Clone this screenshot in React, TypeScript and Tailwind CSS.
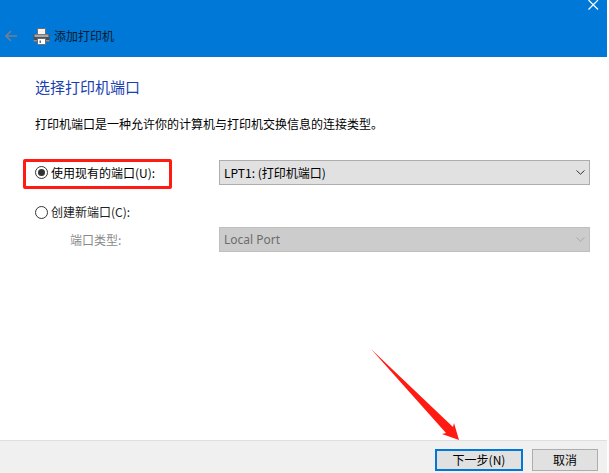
const font = "font-['Microsoft_YaHei','Noto_Sans_CJK_SC','Liberation_Sans',sans-serif]";

function Chevron({ className }: { className: string }) {
  return (
    <svg width="9" height="5" viewBox="0 0 9 5" fill="none" className={className}>
      <path d="M0.5 0.5 L4.5 4.2 L8.5 0.5" stroke="currentColor" strokeWidth="1" />
    </svg>
  );
}

function PrinterIcon() {
  return (
    <svg width="17" height="17" viewBox="0 0 17 17" className="shrink-0">
      <path d="M4.5 0.5h8v6h-8z" fill="#f4f4f4" stroke="#6d6d6d" strokeWidth="1" />
      <path d="M0.5 6h16v7.5h-16z" fill="#4c5056" />
      <path d="M1.5 6.5h14v2.5h-14z" fill="#a4a8ad" />
      <path d="M0.5 12h16v1.5h-16z" fill="#8f9399" />
      <path d="M4.5 10.5h8v6h-8z" fill="#fff" stroke="#6d6d6d" strokeWidth="1" />
      <path d="M6.5 12.5h1.5v2.5h-1.5z" fill="#2f7fb8" />
    </svg>
  );
}

function Radio({ checked }: { checked?: boolean }) {
  return (
    <span className="flex h-[13px] w-[13px] shrink-0 items-center justify-center rounded-full border border-[#333] bg-white">
      {checked && <span className="h-[7px] w-[7px] rounded-full bg-[#333]" />}
    </span>
  );
}

export default function App() {
  return (
    <div className={`relative flex h-[473px] w-[609px] flex-col bg-white pr-[2px] text-[12px] text-black ${font}`}>
      <div className="relative flex h-[57px] items-end bg-[#0078d7]">
        <svg width="11" height="11" viewBox="0 0 11 11" fill="none" className="absolute top-0 right-[8px]">
          <path d="M0.5 0 L10 9.5 M10 0 L0.5 9.5" stroke="#fff" strokeWidth="1.2" />
        </svg>
        <div className="flex h-[44px] w-full items-center pt-[2px] pl-[5px]">
          <svg width="12" height="12" viewBox="0 0 12 12" fill="none" className="shrink-0">
            <path d="M6 1 L1 6 L6 11 M1 6 H12" stroke="#6f7f90" strokeWidth="1.6" />
          </svg>
          <span className="ml-[16px] flex"><PrinterIcon /></span>
          <span className="ml-[4px] text-[#0a1a2a]">添加打印机</span>
        </div>
      </div>

      <div className="flex flex-1 flex-col pl-[35px] pr-[17px]">
        <h1 className="mt-[20px] text-[15px] leading-[20px] font-normal text-[#1a3fb0]">选择打印机端口</h1>
        <p className="mt-[19px] leading-[16px]">打印机端口是一种允许你的计算机与打印机交换信息的连接类型。</p>

        <div className="mt-[29px] flex h-[23px] items-center">
          <div className="relative flex w-[184px] items-center gap-[3px]">
            <Radio checked />
            <span>使用现有的端口(U):</span>
            <div className="absolute top-[-5px] left-[-12px] h-[30px] w-[149px] rounded-[2px] border-[3px] border-[#ff1a12]" />
          </div>
          <div className="flex h-[25px] flex-1 items-center justify-between border border-[#adadad] bg-[#e1e1e1] pr-[4px] pl-[4px]">
            <span>LPT1: (打印机端口)</span>
            <Chevron className="text-[#333]" />
          </div>
        </div>

        <div className="mt-[20px] flex h-[16px] items-center gap-[3px]">
          <Radio />
          <span className="text-[#222]">创建新端口(C):</span>
        </div>

        <div className="mt-[7px] flex items-center">
          <span className="ml-[35px] w-[149px] text-[#8a8a8a]">端口类型:</span>
          <div className="flex h-[25px] flex-1 items-center justify-between border border-[#bfbfbf] bg-[#cccccc] pr-[4px] pl-[4px] text-[#6d6d6d]">
            <span className="font-['Noto_Sans',sans-serif]">Local Port</span>
            <Chevron className="text-[#a8a8a8]" />
          </div>
        </div>
      </div>

      <div className="flex h-[33px] items-end justify-end gap-[9px] border-t border-[#dfdfdf] bg-[#f0f0f0] pr-[9px] pb-[2px]">
        <button className="h-[22px] w-[88px] border-2 border-[#0078d7] bg-[#e1e1e1]">下一步(N)</button>
        <button className="h-[22px] w-[66px] border border-[#adadad] bg-[#e1e1e1]">取消</button>
      </div>

      <svg width="100" height="96" viewBox="0 0 100 96" className="absolute top-[348px] left-[370px]">
        <path d="M1 1 L76 85 L72 86 L89 92 L84 75 L83 79 Z" fill="#ff1a12" />
      </svg>
    </div>
  );
}
